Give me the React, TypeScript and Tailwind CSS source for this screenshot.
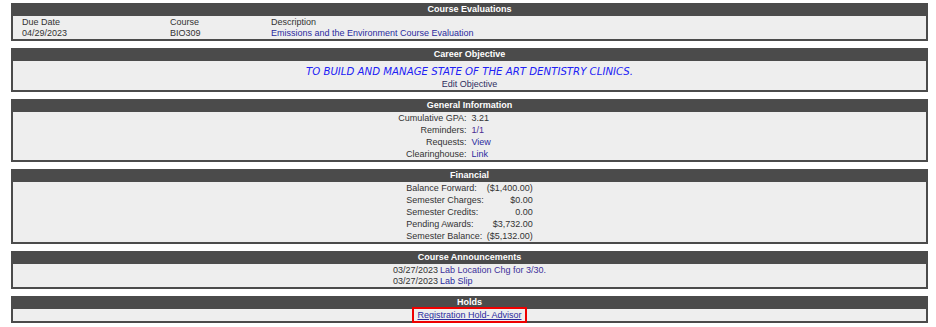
import type { ReactNode } from 'react';

const link = 'text-[#2b2b9e] cursor-pointer';

function Panel({ title, children }: { title: string; children: ReactNode }) {
  return (
    <div className="border-x-2 border-b-2 border-[#4b4b4b] bg-[#eeeeee]">
      <div className="h-[13px] bg-[#4b4b4b] text-center font-bold leading-[13px] text-white">{title}</div>
      {children}
    </div>
  );
}

const gpaRows: [string, ReactNode][] = [
  ['Cumulative GPA:', <span>3.21</span>],
  ['Reminders:', <span className="text-[#4a2d93]">1/1</span>],
  ['Requests:', <span className={link}>View</span>],
  ['Clearinghouse:', <span className={link}>Link</span>],
];

const money = [
  ['Balance Forward:', '($1,400.00)'],
  ['Semester Charges:', '$0.00'],
  ['Semester Credits:', '0.00'],
  ['Pending Awards:', '$3,732.00'],
  ['Semester Balance:', '($5,132.00)'],
];

const announcements = [
  ['03/27/2023', 'Lab Location Chg for 3/30.'],
  ['03/27/2023', 'Lab Slip'],
];

export default function App() {
  return (
    <div className="flex w-[936px] flex-col gap-[7px] bg-white pb-[4px] pl-[11px] pr-[8px] pt-[3px] font-['Liberation_Sans',Arial,sans-serif] text-[9px] text-[#333333]">
      <Panel title="Course Evaluations">
        <div className="grid grid-cols-[148px_101px_1fr] pl-[9px]">
          <div className="h-[12px] leading-[12px]">Due Date</div>
          <div className="h-[12px] leading-[12px]">Course</div>
          <div className="h-[12px] leading-[12px]">Description</div>
          <div className="h-[11px] leading-[11px]">04/29/2023</div>
          <div className="h-[11px] leading-[11px]">BIO309</div>
          <div className={`h-[11px] leading-[11px] ${link}`}>Emissions and the Environment Course Evaluation</div>
        </div>
      </Panel>

      <Panel title="Career Objective">
        <div className="h-[17px] pt-[5px] text-center font-['Verdana','DejaVu_Sans',sans-serif] text-[10.2px] italic leading-[12px] text-[#2020f5]">
          TO BUILD AND MANAGE STATE OF THE ART DENTISTRY CLINICS.
        </div>
        <div className="h-[12px] text-center leading-[12px] text-[#2e2e5e]">Edit Objective</div>
      </Panel>

      <Panel title="General Information">
        <div className="grid grid-cols-2">
          {gpaRows.map(([label, value]) => (
            <div key={label} className="contents">
              <div className="h-[12px] pr-[3px] text-right leading-[12px]">{label}</div>
              <div className="h-[12px] pl-[2px] leading-[12px]">{value}</div>
            </div>
          ))}
        </div>
      </Panel>

      <Panel title="Financial">
        <div className="flex justify-center">
          <div className="grid grid-cols-[auto_auto] gap-x-[3px]">
            {money.map(([label, value]) => (
              <div key={label} className="contents">
                <div className="h-[12px] leading-[12px]">{label}</div>
                <div className="h-[12px] text-right leading-[12px]">{value}</div>
              </div>
            ))}
          </div>
        </div>
      </Panel>

      <Panel title="Course Announcements">
        <div className="flex justify-center">
          <div className="grid grid-cols-[auto_auto] gap-x-[2px]">
            {announcements.map(([date, title], i) => (
              <div key={i} className="contents">
                <div className={i === 0 ? 'h-[12px] leading-[12px]' : 'h-[11px] leading-[11px]'}>{date}</div>
                <div className={`${i === 0 ? 'h-[12px] leading-[12px] text-[#40309a]' : 'h-[11px] leading-[11px] text-[#2b2b9e]'}`}>
                  {title}
                </div>
              </div>
            ))}
          </div>
        </div>
      </Panel>

      <Panel title="Holds">
        <div className="flex h-[12px] justify-center">
          <span className="inline-block h-[12px] px-[3px] leading-[12px] text-[#2b2b9e] underline outline-2 outline-[#ee0000]">
            Registration Hold- Advisor
          </span>
        </div>
      </Panel>
    </div>
  );
}
